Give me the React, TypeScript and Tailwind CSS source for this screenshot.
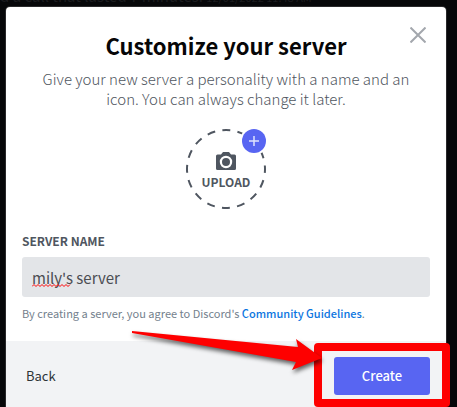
import { useState } from 'react';

function CameraIcon() {
  return (
    <svg width="20" height="18" viewBox="0 0 20 18" aria-hidden="true">
      <path
        fill="#4f5660"
        fillRule="evenodd"
        d="M7 0h6l2 2.500h3.500a1.500 1.500 0 0 1 1.500 1.500v12.500a1.500 1.500 0 0 1-1.500 1.500h-17a1.500 1.500 0 0 1-1.500-1.500v-12.500a1.500 1.500 0 0 1 1.500-1.500h3.500zM10 3.800a6.200 6.200 0 1 0 0 12.400a6.200 6.200 0 1 0 0-12.400zM10 6a4 4 0 1 1 0 8a4 4 0 1 1 0-8z"
      />
    </svg>
  );
}

function UploadButton() {
  return (
    <button type="button" className="relative w-20 h-20 flex flex-col items-center justify-center pt-1 text-[#4f5660]">
      <svg className="absolute inset-0" width="80" height="80" viewBox="0 0 80 80" fill="none" aria-hidden="true">
        <circle cx="40" cy="40" r="39" stroke="#4f5660" strokeWidth="2" strokeDasharray="8 7.317" strokeDashoffset="4" />
        <circle cx="68" cy="12" r="14" fill="#fff" />
        <circle cx="68" cy="12" r="12" fill="#5865f2" />
        <path d="M68 7v10M63 12h10" stroke="#dfe2fd" strokeWidth="1.500" />
      </svg>
      <CameraIcon />
      <span className="text-xs leading-4 font-bold mt-1">UPLOAD</span>
    </button>
  );
}

// red arrow that leads to the create button
function Arrow() {
  return (
    <svg
      className="absolute right-[116px] -top-4 drop-shadow-[1px_3px_2px_rgba(0,0,0,0.6)] pointer-events-none"
      width="200"
      height="50"
      viewBox="0 0 200 50"
      aria-hidden="true"
    >
      <path d="M2 6L168 22L166 14L192 33L162 45L166 37L2 8z" fill="#fe0000" />
    </svg>
  );
}

export default function App() {
  const [serverName, setServerName] = useState("mily's server");

  return (
    <div
      className="relative min-h-screen bg-[#060709] pt-[7px] pl-1.5 pr-[11px] flex flex-col overflow-hidden"
      style={{ fontFamily: '"Noto Sans CJK SC", sans-serif' }}
    >
      {/* dimmed chat behind the modal */}
      <p className="absolute left-0 -top-3.5 text-[15px] leading-5 text-[#1b1c1f] whitespace-nowrap">
        d a call that lasted 7 minutes. <span className="text-[11px]">12/01/2022 11:48 AM</span>
      </p>

      <form
        onSubmit={(e) => e.preventDefault()}
        className="relative grow bg-white rounded-t shadow-[0_0_0_1px_#29292b] flex flex-col"
      >
        <button type="button" aria-label="Close" className="absolute top-5 right-5">
          <svg width="16" height="16" viewBox="0 0 16 16" stroke="#a3a7ad" strokeWidth="2" aria-hidden="true">
            <path d="M0.500 0.500L15.500 15.500M15.500 0.500L0.500 15.500" />
          </svg>
        </button>

        <div className="px-4 pt-6 pb-5 flex flex-col">
          <h1 className="text-[22px] leading-7 font-bold text-[#060607] text-center">
            Customize your server
          </h1>
          <p className="mt-2.5 px-3 text-[15px] leading-5 font-light text-[#4f5660] text-center">
            Give your new server a personality with a name and an icon. You can always change it later.
          </p>

          <div className="mt-5 flex justify-center">
            <UploadButton />
          </div>

          <label htmlFor="serverName" className="mt-6 mb-2 text-xs leading-4 font-bold text-[#4f5660]">
            SERVER NAME
          </label>
          <div className="relative">
            <input
              id="serverName"
              type="text"
              value={serverName}
              spellCheck={false}
              onChange={(e) => setServerName(e.target.value)}
              className="block w-full h-10 px-2.5 rounded-[3px] bg-[#e3e5e8] text-[15px] text-[#4b4d52] outline-none"
            />
            <svg className="absolute left-2.5 bottom-2.5" width="39" height="3" viewBox="0 0 39 3" fill="none" aria-hidden="true">
              <path
                stroke="#f00"
                d="M0 2.500l2-2l2 2l2-2l2 2l2-2l2 2l2-2l2 2l2-2l2 2l2-2l2 2l2-2l2 2l2-2l2 2l2-2l2 2l2-2"
              />
            </svg>
          </div>
          <p className="mt-2 text-[11px] leading-4 text-[#747f8d]">
            By creating a server, you agree to Discord's{' '}
            <a href="#guidelines" className="font-medium text-[#0b75e0]">Community Guidelines</a>.
          </p>
        </div>

        <div className="relative grow bg-[#f2f3f5] px-4 pt-4 flex items-start justify-between">
          <button type="button" className="h-[38px] px-1 text-[13px] text-[#2e3338]">
            Back
          </button>
          <div className="relative">
            <button type="submit" className="w-24 h-[38px] rounded-[3px] bg-[#5865f2] text-[13px] font-medium text-white">
              Create
            </button>
            <div className="absolute -left-5 -right-5 -top-3.5 -bottom-3 border-8 border-[#fe0000] rounded pointer-events-none" />
          </div>
          <Arrow />
        </div>
      </form>
    </div>
  );
}
